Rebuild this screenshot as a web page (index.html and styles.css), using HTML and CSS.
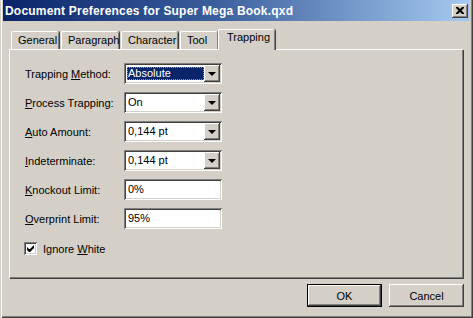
FILE: index.html
```html
<!DOCTYPE html>
<html lang="en">
<head>
  <meta charset="UTF-8" />
  <title>Document Preferences</title>
  <link rel="stylesheet" href="styles.css">
</head>
<body>
  <div class="window">
    <!-- Barra de titulo -->
    <div class="titlebar">
      <span class="title">Document Preferences for Super Mega Book.qxd</span>
      <div class="close-btn">
        <svg width="8" height="7" viewBox="0 0 8 7"><path d="M0 0h2l2 2 2-2h2v1l-2.5 2.5 2.5 2.5v1h-2l-2-2-2 2h-2v-1l2.5-2.5-2.5-2.5z" fill="#000"/></svg>
      </div>
    </div>

    <div class="content">
      <div class="tabs">
        <div class="tab tab-general">General</div>
        <div class="tab tab-paragraph">Paragraph</div>
        <div class="tab tab-character">Character</div>
        <div class="tab tab-tool">Tool</div>
        <div class="tab tab-trapping active">Trapping</div>
      </div>

      <div class="panel">
        <div class="form">
          <label>Trapping <u>M</u>ethod:</label>
          <div class="combo">
            <span class="value selected">Absolute</span>
            <span class="drop"><i></i></span>
          </div>

          <label><u>P</u>rocess Trapping:</label>
          <div class="combo">
            <span class="value">On</span>
            <span class="drop"><i></i></span>
          </div>

          <label><u>A</u>uto Amount:</label>
          <div class="combo">
            <span class="value">0,144 pt</span>
            <span class="drop"><i></i></span>
          </div>

          <label><u>I</u>ndeterminate:</label>
          <div class="combo">
            <span class="value">0,144 pt</span>
            <span class="drop"><i></i></span>
          </div>

          <label><u>K</u>nockout Limit:</label>
          <div class="field"><span class="value">0%</span></div>

          <label><u>O</u>verprint Limit:</label>
          <div class="field"><span class="value">95%</span></div>
        </div>

        <div class="check-row">
          <span class="checkbox">
            <svg width="7" height="7" viewBox="0 0 7 7"><path d="M0 2v3l2 2h1l4-4v-3l-4 4h-1z" fill="#000"/></svg>
          </span>
          <span>Ignore <u>W</u>hite</span>
        </div>
      </div>

      <div class="buttons">
        <div class="btn default">OK</div>
        <div class="btn">Cancel</div>
      </div>
    </div>
  </div>
</body>
</html>
```

FILE: styles.css
```css
* {
  box-sizing: border-box;
}

body {
  margin: 0;
  width: 473px;
  height: 318px;
  overflow: hidden;
  background-color: #d4d0c8;
  font-family: "Liberation Sans", Arial, sans-serif;
  font-size: 11px;
  color: #000;
}

.window {
  height: 318px;
  padding: 0 3px 3px 3px;
  display: flex;
  flex-direction: column;
  box-shadow: inset 1px 0 #d4d0c8, inset 2px 0 #ffffff, inset -1px -1px #404040, inset -2px -2px #808080;
}

/* titulo */
.titlebar {
  height: 21px;
  display: flex;
  align-items: center;
  justify-content: space-between;
  padding: 0 2px 0 2px;
  background: linear-gradient(to right, #0a246a 0%, #3a5e9c 45%, #a6caf0 100%);
}

.title {
  color: #fff;
  font-weight: bold;
  font-size: 12px;
  letter-spacing: 0.2px;
}

.close-btn {
  width: 16px;
  height: 14px;
  background-color: #d4d0c8;
  display: flex;
  align-items: center;
  justify-content: center;
  box-shadow: inset -1px -1px #404040, inset 1px 1px #ffffff, inset -2px -2px #808080;
}

.content {
  flex: 1;
  display: flex;
  flex-direction: column;
  padding: 8px 6px 0 6px;
}

/* abas */
.tabs {
  display: flex;
  align-items: flex-end;
  height: 20px;
  padding-left: 2px;
  position: relative;
  z-index: 1;
}

.tab {
  height: 18px;
  padding: 2px 0 0 6px;
  border-top: 1px solid #fff;
  border-left: 1px solid #fff;
  box-shadow: inset -1px 0 #808080, 1px 0 #404040;
  border-radius: 2px 2px 0 0;
  background-color: #d4d0c8;
  margin-right: 2px;
}

.tab-general { width: 48px; }
.tab-paragraph { width: 58px; }
.tab-character { width: 57px; }
.tab-tool { width: 38px; margin-right: 0; }

.tab.active {
  height: 21px;
  width: 57px;
  margin-bottom: -1px;
  padding: 1px 0 0 8px;
}

.panel {
  height: 229px;
  border-top: 1px solid #fff;
  border-left: 1px solid #fff;
  box-shadow: inset -1px -1px #808080, 1px 1px #404040;
  padding: 13px 0 0 15px;
  margin-right: 1px;
}

.form {
  display: grid;
  grid-template-columns: 99px 98px;
  grid-auto-rows: 21px;
  row-gap: 8px;
  align-items: center;
}

.combo, .field {
  height: 21px;
  background-color: #fff;
  position: relative;
  display: flex;
  align-items: center;
  padding-left: 3px;
  box-shadow: inset 1px 1px #808080, inset -1px -1px #ffffff, inset 2px 2px #404040, inset -2px -2px #d4d0c8;
}

.value {
  line-height: 13px;
  padding: 0 1px;
}

.value.selected {
  background-color: #0a246a;
  color: #fff;
  width: 77px;
  outline: 1px dotted #8a98b8;
  outline-offset: -1px;
}

.drop {
  position: absolute;
  right: 2px;
  top: 2px;
  width: 16px;
  height: 17px;
  background-color: #d4d0c8;
  display: flex;
  align-items: center;
  justify-content: center;
  box-shadow: inset -1px -1px #404040, inset 1px 1px #ffffff, inset -2px -2px #808080;
}

.drop i {
  width: 0;
  height: 0;
  border-left: 4px solid transparent;
  border-right: 4px solid transparent;
  border-top: 4px solid #000;
  margin-top: 1px;
}

.check-row {
  display: flex;
  align-items: center;
  gap: 6px;
  margin-top: 13px;
  margin-left: -1px;
}

.checkbox {
  width: 13px;
  height: 13px;
  background-color: #fff;
  display: flex;
  align-items: center;
  justify-content: center;
  box-shadow: inset 1px 1px #808080, inset -1px -1px #ffffff, inset 2px 2px #404040, inset -2px -2px #d4d0c8;
}

/* botoes */
.buttons {
  display: flex;
  justify-content: flex-end;
  gap: 7px;
  margin-top: 6px;
}

.btn {
  width: 75px;
  height: 23px;
  display: flex;
  align-items: center;
  justify-content: center;
  background-color: #d4d0c8;
  box-shadow: inset -1px -1px #404040, inset 1px 1px #ffffff, inset -2px -2px #808080;
}

.btn.default {
  border: 1px solid #000;
  box-shadow: inset -1px -1px #404040, inset 1px 1px #ffffff, inset -2px -2px #808080;
}
```
